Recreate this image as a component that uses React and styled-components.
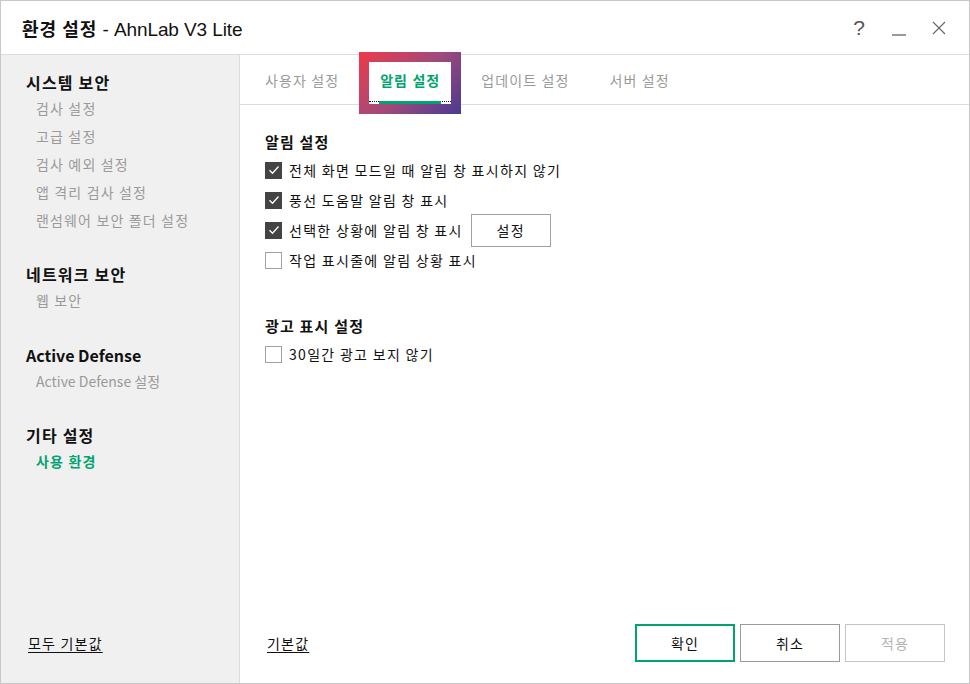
import React from 'react'
import styled, { createGlobalStyle } from 'styled-components'

const GlobalStyle = createGlobalStyle`
  html, body { margin: 0; padding: 0; background: #fff; }
  body { font-family: "Noto Sans CJK KR", "Noto Sans", sans-serif; }
  * { box-sizing: border-box; }
`

const Window = styled.div`
  width: 970px;
  height: 684px;
  border: 1px solid #c8c8c8;
  display: flex;
  flex-direction: column;
  background: #fff;
  overflow: hidden;
`

const TitleBar = styled.div`
  height: 54px;
  flex-shrink: 0;
  display: flex;
  align-items: center;
  padding: 0 21px 0 21px;
  border-bottom: 1px solid #dcdcdc;
`

const Title = styled.div`
  font-size: 18px;
  color: #111;
  flex: 1;
  b { font-weight: 700; letter-spacing: 1px; }
  span { font-family: "Liberation Sans", "Noto Sans", sans-serif; font-weight: 400; font-size: 19px; letter-spacing: -0.1px; }
`

const WinButtons = styled.div`
  display: flex;
  align-items: center;
  gap: 22px;
  color: #555;
`

const WinBtn = styled.div`
  width: 18px;
  height: 20px;
  display: flex;
  align-items: center;
  justify-content: center;
  font-family: "Liberation Sans", sans-serif;
  font-size: 21px;
  font-weight: 300;
`

const Body = styled.div`
  flex: 1;
  display: flex;
  min-height: 0;
`

const Sidebar = styled.div`
  width: 239px;
  background: #f0f0f0;
  border-right: 1px solid #dcdcdc;
  display: flex;
  flex-direction: column;
  padding: 14px 0 30px 25px;
`

const Group = styled.div`
  display: flex;
  flex-direction: column;
  margin-bottom: ${({ $gap }) => $gap}px;
`

const GroupTitle = styled.div`
  font-size: 16px;
  font-weight: 700;
  color: #111;
  height: 26px;
  line-height: 26px;
  letter-spacing: ${({ $ko }) => ($ko ? 1.2 : 0)}px;
`

const NavItem = styled.div`
  font-size: 14px;
  height: 28px;
  line-height: 26px;
  padding-left: 10px;
  letter-spacing: ${({ $ko }) => ($ko ? 1.15 : 0)}px;
  color: ${({ $active }) => ($active ? '#00a470' : '#9a9a9a')};
  font-weight: ${({ $active }) => ($active ? 700 : 400)};
`

const Spacer = styled.div`
  flex: 1;
`

const LinkText = styled.div`
  font-size: 14px;
  color: #111;
  letter-spacing: 1.2px;
  text-decoration: underline;
  text-underline-offset: 3px;
  padding-left: ${({ $pad }) => $pad || 0}px;
`

const Main = styled.div`
  flex: 1;
  display: flex;
  flex-direction: column;
`

const TabBar = styled.div`
  height: 50px;
  flex-shrink: 0;
  display: flex;
  align-items: flex-end;
  padding-left: 5px;
  border-bottom: 1px solid #dcdcdc;
`

const Tab = styled.div`
  position: relative;
  height: 42px;
  padding: 0 20px 6px;
  display: flex;
  align-items: center;
  font-size: 14px;
  letter-spacing: 1.1px;
  color: ${({ $active }) => ($active ? '#00a470' : '#9a9a9a')};
  font-weight: ${({ $active }) => ($active ? 700 : 400)};
  background: #fff;
  z-index: 1;
  margin-right: ${({ $active }) => ($active ? 10 : 0)}px;
  margin-left: ${({ $active }) => ($active ? 10 : 0)}px;
  padding-left: ${({ $active }) => ($active ? 11 : 20)}px;
  padding-right: ${({ $active }) => ($active ? 11 : 20)}px;
  &::before {
    content: '';
    display: ${({ $active }) => ($active ? 'block' : 'none')};
    position: absolute;
    left: -10px;
    right: -10px;
    top: -10px;
    bottom: -10px;
    background: linear-gradient(135deg, #ee3a4a 0%, #a24a7a 50%, #4a3a92 100%);
    z-index: -2;
  }
  &::after {
    content: '';
    display: ${({ $active }) => ($active ? 'block' : 'none')};
    position: absolute;
    left: 0;
    right: 0;
    top: 0;
    bottom: 0;
    background: #fff;
    z-index: -1;
  }
`

const FocusLine = styled.span`
  position: absolute;
  left: 0;
  right: 0;
  bottom: 2px;
  border-bottom: 1px dotted #111;
`

const ActiveBar = styled.span`
  position: absolute;
  left: 10px;
  right: 10px;
  bottom: 0;
  height: 3px;
  background: #00a470;
`

const Content = styled.div`
  flex: 1;
  padding: 24px 25px 0;
`

const Section = styled.div`
  margin-bottom: ${({ $gap }) => $gap || 0}px;
`

const SectionTitle = styled.div`
  font-size: 15px;
  font-weight: 700;
  color: #111;
  height: 26px;
  line-height: 26px;
  letter-spacing: 1.2px;
`

const Row = styled.label`
  display: flex;
  align-items: center;
  height: 30px;
  gap: 7px;
  font-size: 14px;
  letter-spacing: 1.3px;
  color: #111;
`

const Box = styled.span`
  width: 17px;
  height: 17px;
  flex-shrink: 0;
  display: flex;
  align-items: center;
  justify-content: center;
  background: ${({ $on }) => ($on ? '#444' : '#fff')};
  border: 1px solid ${({ $on }) => ($on ? '#444' : '#a0a0a0')};
`

const SmallButton = styled.div`
  width: 80px;
  height: 33px;
  margin-left: 1px;
  border: 1px solid #a0a0a0;
  display: flex;
  align-items: center;
  justify-content: center;
  font-size: 14px;
  color: #111;
`

const Footer = styled.div`
  height: 81px;
  flex-shrink: 0;
  display: flex;
  align-items: center;
  padding: 0 24px 0 27px;
  gap: 5px;
`

const FooterButton = styled.div`
  width: 100px;
  height: 38px;
  display: flex;
  align-items: center;
  justify-content: center;
  font-size: 14px;
  letter-spacing: 1px;
  color: ${({ $disabled }) => ($disabled ? '#b4b4b4' : '#111')};
  border: ${({ $primary }) => ($primary ? '2px solid #00a470' : '1px solid')};
  border-color: ${({ $primary, $disabled }) => ($primary ? '#00a470' : $disabled ? '#c4c4c4' : '#9a9a9a')};
`

const Check = () => (
  <svg width="12" height="10" viewBox="0 0 12 10">
    <path d="M1.5 5.2 L4.5 8.2 L10.5 1.5" fill="none" stroke="#fff" strokeWidth="1.3" />
  </svg>
)

const CheckRow = ({ on, children, extra }) => (
  <Row>
    <Box $on={on}>{on && <Check />}</Box>
    {children}
    {extra}
  </Row>
)

const nav = [
  { title: '시스템 보안', items: ['검사 설정', '고급 설정', '검사 예외 설정', '앱 격리 검사 설정', '랜섬웨어 보안 폴더 설정'], gap: 26 },
  { title: '네트워크 보안', items: ['웹 보안'], gap: 27 },
  { title: 'Active Defense', items: ['Active Defense 설정'], gap: 26, latin: true },
  { title: '기타 설정', items: ['사용 환경'], active: '사용 환경', gap: 0 },
]

const tabs = ['사용자 설정', '알림 설정', '업데이트 설정', '서버 설정']

export default function App() {
  return (
    <>
      <GlobalStyle />
      <Window>
        <TitleBar>
          <Title><b>환경 설정</b><span> - AhnLab V3 Lite</span></Title>
          <WinButtons>
            <WinBtn>?</WinBtn>
            <WinBtn>
              <svg width="16" height="16" viewBox="0 0 16 16"><path d="M1 15 H15" stroke="#555" strokeWidth="1.2" /></svg>
            </WinBtn>
            <WinBtn>
              <svg width="16" height="16" viewBox="0 0 16 16"><path d="M2 2 L14 14 M14 2 L2 14" stroke="#666" strokeWidth="1.1" /></svg>
            </WinBtn>
          </WinButtons>
        </TitleBar>
        <Body>
          <Sidebar>
            {nav.map((g) => (
              <Group key={g.title} $gap={g.gap}>
                <GroupTitle $ko={!g.latin}>{g.title}</GroupTitle>
                {g.items.map((it) => (
                  <NavItem key={it} $ko={!g.latin} $active={g.active === it}>{it}</NavItem>
                ))}
              </Group>
            ))}
            <Spacer />
            <LinkText $pad={2}>모두 기본값</LinkText>
          </Sidebar>
          <Main>
            <TabBar>
              {tabs.map((t, i) => (
                <Tab key={t} $active={i === 1}>
                  {t}
                  {i === 1 && <><FocusLine /><ActiveBar /></>}
                </Tab>
              ))}
            </TabBar>
            <Content>
              <Section $gap={38}>
                <SectionTitle>알림 설정</SectionTitle>
                <CheckRow on>전체 화면 모드일 때 알림 창 표시하지 않기</CheckRow>
                <CheckRow on>풍선 도움말 알림 창 표시</CheckRow>
                <CheckRow on extra={<SmallButton>설정</SmallButton>}>선택한 상황에 알림 창 표시</CheckRow>
                <CheckRow>작업 표시줄에 알림 상황 표시</CheckRow>
              </Section>
              <Section>
                <SectionTitle>광고 표시 설정</SectionTitle>
                <CheckRow>30일간 광고 보지 않기</CheckRow>
              </Section>
            </Content>
            <Footer>
              <LinkText>기본값</LinkText>
              <Spacer />
              <FooterButton $primary>확인</FooterButton>
              <FooterButton>취소</FooterButton>
              <FooterButton $disabled>적용</FooterButton>
            </Footer>
          </Main>
        </Body>
      </Window>
    </>
  )
}
